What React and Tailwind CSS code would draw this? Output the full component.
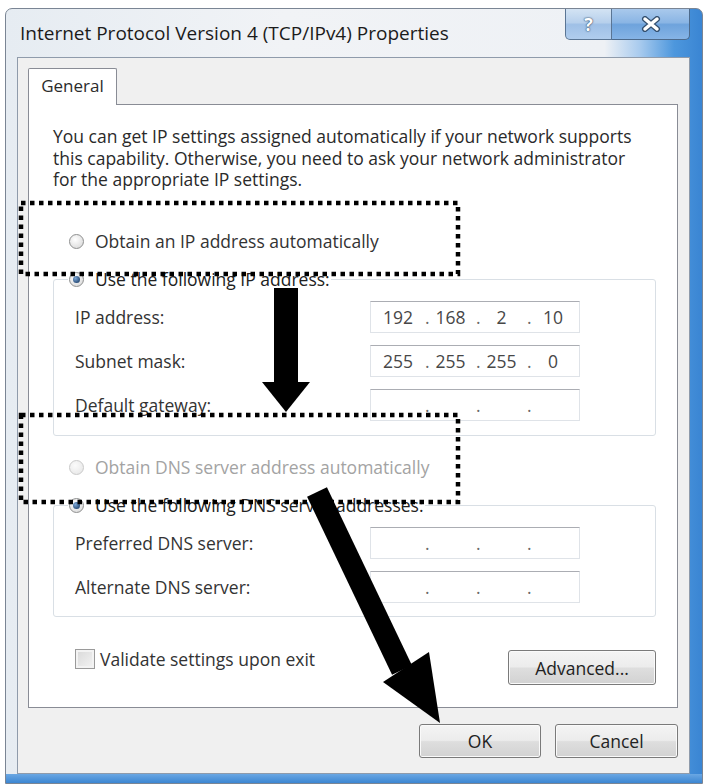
import React from "react";

function Radio({ checked = false, disabled = false }) {
  return (
    <span
      className={
        disabled
          ? "flex h-[15px] w-[15px] shrink-0 items-center justify-center rounded-full border border-[#c9c9c9] bg-[radial-gradient(circle_at_40%_35%,#fbfbfb,#e4e4e4)]"
          : "flex h-[15px] w-[15px] shrink-0 items-center justify-center rounded-full border border-[#8e8f8f] bg-[radial-gradient(circle_at_40%_35%,#ffffff,#d4d4d4)]"
      }
    >
      {checked && (
        <span className="h-[7px] w-[7px] rounded-full bg-[radial-gradient(circle_at_35%_35%,#7aa6d6,#0d2d55)]" />
      )}
    </span>
  );
}

function IpField({ parts = ["", "", "", ""] }) {
  return (
    <div className="flex h-[32px] w-[210px] items-center border border-[#dfe3e8] border-t-[#abadb3] bg-white text-[17.5px] leading-[24px] text-[#474747]">
      <span className="w-[54px] text-center">{parts[0]}</span>
      <span className="w-[4px] text-center text-[#6a6a6a]">.</span>
      <span className="w-[47px] pr-[4px] text-center">{parts[1]}</span>
      <span className="w-[4px] text-center text-[#6a6a6a]">.</span>
      <span className="w-[47px] pr-[4px] text-center">{parts[2]}</span>
      <span className="w-[4px] text-center text-[#6a6a6a]">.</span>
      <span className="w-[48px] pr-[4px] text-center">{parts[3]}</span>
    </div>
  );
}

function Field({ label, parts }) {
  return (
    <div className="flex h-[32px] items-center">
      <span className="w-[295px] text-[17.5px] leading-[24px] text-[#333333]">{label}</span>
      <IpField parts={parts} />
    </div>
  );
}

function Button({ children, className }) {
  return (
    <div
      className={
        "flex items-center justify-center rounded-[3px] border border-[#7a7a7a] bg-[linear-gradient(180deg,#f4f4f4_0%,#ececec_48%,#dedede_52%,#d2d2d2_100%)] text-[17.5px] leading-[24px] text-[#222222] shadow-[inset_0_0_0_1px_#fafafa] " +
        className
      }
    >
      {children}
    </div>
  );
}

export default function App() {
  return (
    <div className="relative h-[784px] w-[703px] overflow-hidden bg-white pl-[5px] pt-[8px] font-['Open_Sans','Noto_Sans',sans-serif]">
      {/* window frame */}
      <div className="flex h-[776px] w-[698px] flex-col overflow-hidden rounded-t-[7px] border border-[#7a8594] [background-image:linear-gradient(90deg,#e6ecf2_0%,#f1f3f6_40%,#eef1f5_86%,#a9cbee_91%,#4d97dd_96%,#3a85d3_100%)]">
        {/* title bar */}
        <div className="flex h-[48px] shrink-0 items-start">
          <div className="whitespace-nowrap pl-[14px] pt-[12px] text-[19px] leading-[24px] text-[#1b1b1b]">
            Internet Protocol Version 4 (TCP/IPv4) Properties
          </div>
          <div className="ml-auto mr-[12px] flex">
            <div className="flex h-[31px] w-[47px] items-center justify-center rounded-bl-[5px] border border-t-0 border-[#5a7594] bg-[linear-gradient(180deg,#d3e3f3_0%,#b7d0ec_45%,#9fc0e6_52%,#b0cdee_100%)] text-[18px] font-bold text-white [text-shadow:0_0_2px_#2c4766,0_0_1px_#2c4766]">
              ?
            </div>
            <div className="flex h-[31px] w-[78px] items-center justify-center rounded-br-[5px] border border-l-0 border-t-0 border-[#4c6a8c] bg-[linear-gradient(180deg,#a9c9ec_0%,#8ab5e4_45%,#6ea3dc_52%,#86b4e6_100%)]">
              <svg width="20" height="16" viewBox="0 0 20 16">
                <path d="M4 3 L16 13 M16 3 L4 13" stroke="#34506f" strokeWidth="6" strokeLinecap="round" fill="none" />
                <path d="M4 3 L16 13 M16 3 L4 13" stroke="#ffffff" strokeWidth="3.5" strokeLinecap="round" fill="none" />
              </svg>
            </div>
          </div>
        </div>

        {/* client area */}
        <div className="ml-[11px] mr-[12px] flex h-[717px] shrink-0 flex-col border border-[#8f9bab] bg-[#f0f0f0] pl-[10px] pr-[11px] pt-[10px]">
          {/* tab strip */}
          <div className="flex">
            <div className="relative z-10 -mb-px flex h-[37px] w-[89px] items-center justify-center rounded-t-[2px] border border-b-0 border-[#898c95] bg-white pb-[2px] text-[17px] leading-[24px] text-[#2b2b2b]">
              General
            </div>
          </div>

          {/* tab panel */}
          <div className="flex h-[604px] flex-col border border-[#898c95] bg-white pl-[24px] pr-[21px] pt-[21px]">
            <p className="whitespace-nowrap text-[17.5px] leading-[21.5px] text-[#2a2a2a]">
              You can get IP settings assigned automatically if your network supports
              <br />
              this capability. Otherwise, you need to ask your network administrator
              <br />
              for the appropriate IP settings.
            </p>

            <div className="ml-[16px] mt-[39.5px] flex h-[22px] items-center gap-[11px] text-[17.5px] text-[#333333]">
              <Radio />
              <span>Obtain an IP address automatically</span>
            </div>

            <fieldset className="mt-[16px] rounded-[3px] border border-[#d9dfe5]">
              <legend className="ml-[14px] px-[1px]">
                <span className="flex h-[22px] items-center gap-[11px] whitespace-nowrap text-[17.5px] text-[#222222]">
                  <Radio checked />
                  <span>Use the following IP address:</span>
                </span>
              </legend>
              <div className="flex flex-col gap-[12px] pb-[14px] pl-[21px] pt-[11px]">
                <Field label="IP address:" parts={["192", "168", "2", "10"]} />
                <Field label="Subnet mask:" parts={["255", "255", "255", "0"]} />
                <Field label="Default gateway:" />
              </div>
            </fieldset>

            <div className="ml-[16px] mt-[20px] flex h-[22px] items-center gap-[11px] text-[17.5px] text-[#a3a3a3]">
              <Radio disabled />
              <span>Obtain DNS server address automatically</span>
            </div>

            <fieldset className="mt-[16px] rounded-[3px] border border-[#d9dfe5]">
              <legend className="ml-[14px] px-[1px]">
                <span className="flex h-[22px] items-center gap-[11px] whitespace-nowrap text-[17.5px] text-[#222222]">
                  <Radio checked />
                  <span>Use the following DNS server addresses:</span>
                </span>
              </legend>
              <div className="flex flex-col gap-[12px] pb-[13px] pl-[21px] pt-[11px]">
                <Field label="Preferred DNS server:" />
                <Field label="Alternate DNS server:" />
              </div>
            </fieldset>

            <div className="mt-[31px] flex items-start justify-between">
              <div className="ml-[22px] flex h-[22px] items-center gap-[5px] text-[17.5px] text-[#333333]">
                <span className="h-[20px] w-[20px] shrink-0 border border-[#9a9a9a] bg-[linear-gradient(135deg,#d8d8d8,#f4f4f4)] shadow-[inset_0_0_0_2px_#f3f3f3]" />
                <span>Validate settings upon exit</span>
              </div>
              <Button className="mt-[2px] h-[35px] w-[148px]">Advanced...</Button>
            </div>
          </div>

          {/* dialog buttons */}
          <div className="mt-[16px] flex justify-end gap-[14px]">
            <Button className="h-[34px] w-[122px]">OK</Button>
            <Button className="h-[34px] w-[123px]">Cancel</Button>
          </div>
        </div>

        {/* bottom frame */}
        <div className="flex-1 bg-[linear-gradient(180deg,#6aa7e3_0%,#3c86d2_100%)]" />
      </div>

      {/* callouts drawn over the dialog */}
      <svg className="pointer-events-none absolute left-0 top-0" width="703" height="784" viewBox="0 0 703 784">
        <rect x="21" y="203" width="437" height="71" fill="none" stroke="#000" strokeWidth="4.5" strokeDasharray="4.5 4.5" />
        <rect x="21" y="415" width="437" height="87" fill="none" stroke="#000" strokeWidth="4.5" strokeDasharray="4.5 4.5" />
        <rect x="274" y="288" width="24" height="95" fill="#000" />
        <polygon points="262,382 310,382 286,412" fill="#000" />
        <line x1="317" y1="492" x2="402" y2="670" stroke="#000" strokeWidth="22" />
        <polygon points="383,682 429,652 440,723" fill="#000" />
      </svg>
    </div>
  );
}
